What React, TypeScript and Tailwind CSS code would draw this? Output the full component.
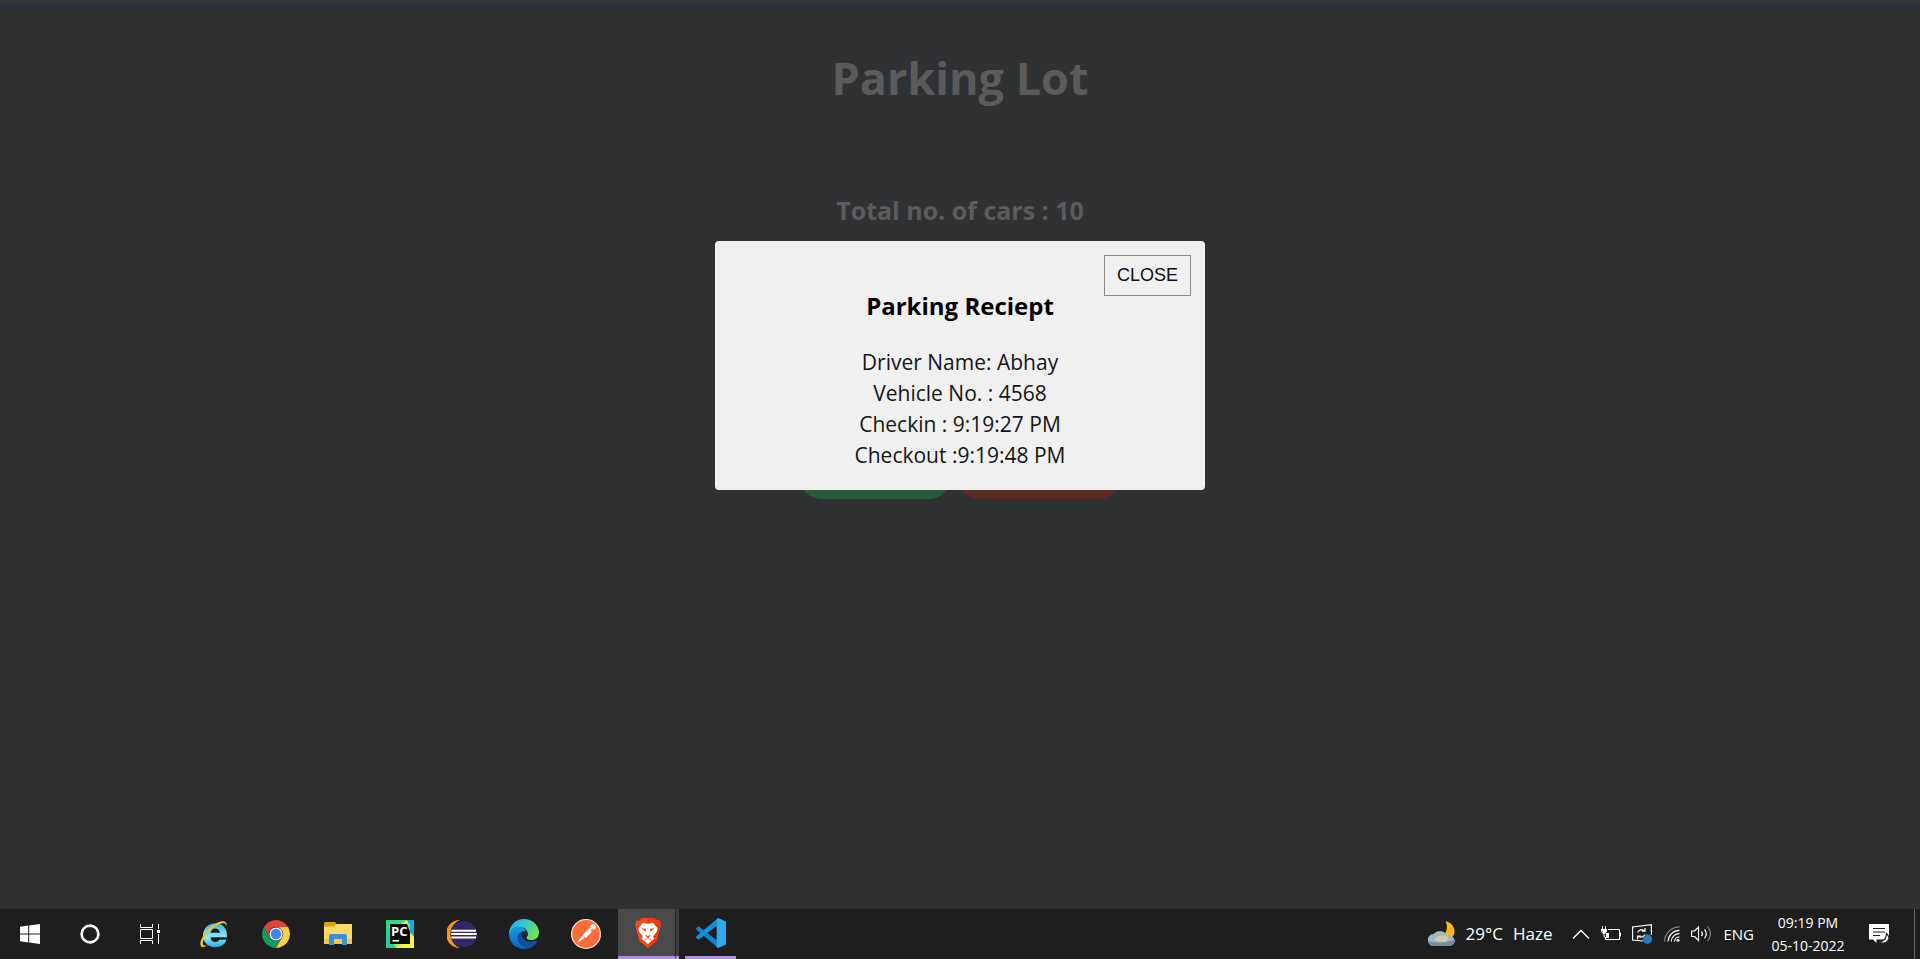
import type { ReactNode } from "react";

const receipt = ["Driver Name: Abhay", "Vehicle No. : 4568", "Checkin : 9:19:27 PM", "Checkout :9:19:48 PM"];

function StartIcon() {
  return (
    <svg width="20" height="20" viewBox="0 0 20 20" fill="#fff">
      <path d="M0 2.8 8.2 1.6V9.5H0zM9.2 1.5 20 0v9.5H9.2zM0 10.5h8.2v8L0 17.3zM9.2 10.5H20V20L9.2 18.6z" />
    </svg>
  );
}

function CortanaIcon() {
  return (
    <svg width="20" height="20" viewBox="0 0 20 20" fill="none">
      <circle cx="10" cy="10" r="8.4" stroke="#fff" strokeWidth="2.6" />
    </svg>
  );
}

function TaskViewIcon() {
  return (
    <svg width="20" height="20" viewBox="0 0 20 20" fill="none" stroke="#fff" strokeWidth="1">
      <path d="M.5 5.500h12v9H.5zM.5 0v3.500h12V0M.5 20v-3.500h12V20M18.500 0v5M18.500 10v10" />
      <path d="M17 6h3v3h-3z" fill="#fff" stroke="none" />
    </svg>
  );
}

function ExplorerEIcon() {
  return (
    <svg width="30" height="30" viewBox="0 0 30 30" fill="none">
      <defs>
        <linearGradient id="ie" x1="0" y1="0" x2="0" y2="1">
          <stop stopColor="#3fb4e4" />
          <stop offset=".6" stopColor="#8be9fc" />
          <stop offset="1" stopColor="#2ea2df" />
        </linearGradient>
      </defs>
      <path d="M28 18.200H11.500c.2 3 2 4.800 4.700 4.800 2 0 3.300-.8 4.100-2.200h7.200C26 25.500 21.800 28.200 16.300 28.200 9 28.200 4 23.500 4 16.500S9.200 4.200 16.500 4.200c7.300 0 12 5.200 11.500 14zM20.900 13.800c-.2-2.500-1.900-4.200-4.500-4.200s-4.400 1.700-4.800 4.200z" fill="url(#ie)" />
      <path d="M27.300 7.800c.8-2.700.3-4.500-1.400-5.100C20.500.6 8.500 8.300 3.600 17.700.8 23.100.5 27.400 3.400 28c1.500.3 3.600-.5 5.900-2-6.300 2.300-6.800-1.900-3.300-8C10.600 9.900 20.300 3.700 24.900 4.300c1.600.2 2.400 1.300 2.400 3.500z" fill="#f2c624" />
    </svg>
  );
}

function ChromeIcon() {
  return (
    <svg width="28" height="28" viewBox="0 0 28 28">
      <path d="M1.900 7A14 14 0 0 1 26.100 7H14a7 7 0 0 0-6.100 10.500z" fill="#dc4437" />
      <path d="M1.900 7A14 14 0 0 0 14 28l6.100-10.500a7 7 0 0 1-12.200 0z" fill="#109d59" />
      <path d="M26.100 7A14 14 0 0 1 14 28l6.100-10.500A7 7 0 0 0 14 7z" fill="#fccd41" />
      <circle cx="14" cy="14" r="6.600" fill="#eef1f6" />
      <circle cx="14" cy="14" r="5.200" fill="#4286f5" />
    </svg>
  );
}

function FolderIcon() {
  return (
    <svg width="28" height="24" viewBox="0 0 28 24">
      <path d="M0 1.500Q0 0 1.500 0H11l2 2.500-2 3H0z" fill="#dfa00c" />
      <path d="M0 4.500h10L12.500 2H28v19a1 1 0 0 1-1 1H1a1 1 0 0 1-1-1z" fill="#ffda6b" />
      <path d="M0 17h28v4a1 1 0 0 1-1 1H1a1 1 0 0 1-1-1z" fill="#f6c64b" />
      <path d="M5 23V14q0-2 2-2h14q2 0 2 2v9h-5v-6h-8v6z" fill="#3b8fd3" />
    </svg>
  );
}

function PyCharmIcon() {
  return (
    <svg width="28" height="28" viewBox="0 0 28 28">
      <defs>
        <linearGradient id="pc" x1="0" y1="0" x2="1" y2="1">
          <stop stopColor="#21d789" />
          <stop offset=".5" stopColor="#3fe07e" />
          <stop offset=".75" stopColor="#fcf84a" />
          <stop offset="1" stopColor="#fcf84a" />
        </linearGradient>
      </defs>
      <path d="M0 0h28v28H0z" fill="url(#pc)" />
      <path d="M0 10 10 28H0z" fill="#1fd49a" />
      <path d="M20 0h8v17l-4-5V4z" fill="#15a7e8" />
      <path d="M15 4l6-4 2 5z" fill="#f3ee55" />
      <path d="M4 4h20v20H4z" fill="#0a0a0a" />
      <path d="m21 4 3 8V4z" fill="#8fdc5a" />
      <text x="5" y="16" fill="#fff" fontFamily="Open Sans, sans-serif" fontWeight="700" fontSize="13">PC</text>
      <path d="M6.500 20H13v1.600H6.500z" fill="#fff" />
    </svg>
  );
}

function EclipseIcon() {
  return (
    <svg width="30" height="28" viewBox="0 0 30 28">
      <path d="M13 0A14 14 0 0 0 13 28 15 15 0 0 1 13 0z" fill="#f7941e" />
      <circle cx="17" cy="14" r="13" fill="#33276a" />
      <path d="M4.500 9.700h24.500v2H4.200zM3.900 13h25.800v2H3.900zM4.200 16.400h25l-.3 2H4.500z" fill="#fff" />
    </svg>
  );
}

function EdgeIcon() {
  return (
    <svg width="30" height="30" viewBox="0 0 30 30">
      <defs>
        <linearGradient id="edge-top" x1="0" y1="0" x2="1" y2=".5">
          <stop stopColor="#2aa8e4" />
          <stop offset=".5" stopColor="#39c5d2" />
          <stop offset="1" stopColor="#6be254" />
        </linearGradient>
        <linearGradient id="edge-side" x1="0" y1="0" x2="0" y2="1">
          <stop stopColor="#1ca0e4" />
          <stop offset="1" stopColor="#0d63bd" />
        </linearGradient>
      </defs>
      <path d="M0 14.500C0 7 7 5 12 7c3 1 5 4 5.500 6-3-1-5 2-4.500 5 1 4.500 7 6.500 12 4.500 1.800-.7 3.300-1.200 3 .3C25.500 27 20.500 30 15 30 6.500 30 0 23.500 0 14.500z" fill="url(#edge-side)" />
      <path d="M13 12.500C8 14 7 20 10.500 24.500c3 3.800 7 5 10.500 4.200 3-1.200 5.700-3.400 7.200-6.200.3-.9-.8-.7-1.500-.4-6 2-12-.6-13.200-4.600-.5-1.800-.5-3.500-.5-5z" fill="#124f9d" />
      <path d="M0 14.500C.5 6 7 0 15 0c9 0 15 6.500 15 13.500 0 5-3.500 7.500-7.500 7.500-3 0-5-1-5-2.300 0-.8 1.300-1.200 1.300-3.700 0-4.500-4-7.500-9.300-7.500C5 7.500 1.500 10 0 14.500z" fill="url(#edge-top)" />
      <circle cx="15.300" cy="15.300" r="3.200" fill="#152636" />
    </svg>
  );
}

function PostmanIcon() {
  return (
    <svg width="30" height="30" viewBox="0 0 30 30">
      <circle cx="15" cy="15" r="15" fill="#fde9df" />
      <circle cx="15" cy="15" r="13.900" fill="#fb6d38" />
      <path d="m6 24 5.300-7.600 2.500 2.400zM13 16.300l5.800-6 2 2-6.200 5.600z" fill="#fff" />
      <path d="m12.500 16.800 7-7" stroke="#fff" strokeWidth="2.500" />
      <circle cx="22" cy="8" r="2.800" fill="#fff" />
      <path d="m20.500 8.500 2 1.500" stroke="#fb6d38" />
      <path d="m14 18.500 6-5.500" stroke="#fff" strokeWidth="1.200" />
    </svg>
  );
}

function BraveIcon() {
  return (
    <svg width="26" height="30" viewBox="0 0 26 30">
      <path d="M7 0h12l3.500 2.800 2-.2L26 6l-1 4-3.500 13L13 30 4.500 23 1 10 0 6l1.500-3.400 2 .2z" fill="#f4471f" />
      <path d="M13 0h6l3.500 2.800 2-.2L26 6l-1 4-3.500 13L13 30z" fill="#ee3a10" />
      <path d="m8 4.800 5 .9 5-.9 4.700 5.500-.9 3.700-3.700 4.300 1.200 2.400-2.300 1.800-4-2.500-4 2.500-2.300-1.800 1.200-2.400L4.200 14l-.9-3.700z" fill="#fff" />
      <path d="m6.500 10 4.500 1-.5 3zM19.500 10 15 11l.5 3zM10 16.500l3 1.500 3-1.500-1.800 3h-2.400z" fill="#f4471f" />
      <path d="m9 22.800 4-2 4 2-4 3.200z" fill="#fff" />
    </svg>
  );
}

function CodeIcon() {
  return (
    <svg width="30" height="30" viewBox="0 0 30 30">
      <path d="M0 10.600 2.500 8.300l19.700 15V30L.4 11.800q-.6-.6-.4-1.200z" fill="#1580c4" />
      <path d="M0 19.500 2.500 21.800l19.700-15V0L.4 18.300q-.6.600-.4 1.200z" fill="#1a8fd8" />
      <path d="m22.200 0 7.800 3.500v23L22.200 30q-1.500-.4-1.500-2V2q0-1.600 1.500-2z" fill="#2fa9ee" />
    </svg>
  );
}

function WeatherIcon() {
  return (
    <svg width="28" height="26" viewBox="0 0 28 26">
      <path d="M17.500 0c6 1.500 9 6 9 10.500 0 3-1.500 5.500-4 6.500l-6.500-3C19 10.500 20 5 17.500 0z" fill="#fcb813" />
      <path d="M6 25a6 6 0 0 1-.5-12A8 7.500 0 0 1 19 14a6 5.600 0 1 1 2.500 11z" fill="#a3b5c3" />
      <path d="M6 19C9 14.500 14 13.500 19 15c2 1.500 1 5-3 6z" fill="#d0caa8" />
      <path d="M.3 20q13 4 26.900-1.500A5.900 5.900 0 0 1 21.500 25H6Q1.500 25 .3 20z" fill="#7a8d9e" />
    </svg>
  );
}

function ChevronIcon() {
  return (
    <svg width="18" height="12" viewBox="0 0 18 12" fill="none" stroke="#fff" strokeWidth="1.300">
      <path d="m1 10.500 8-8 8 8" />
    </svg>
  );
}

function BatteryIcon() {
  return (
    <svg width="20" height="16" viewBox="0 0 20 16" fill="none" stroke="#fff" strokeWidth="1">
      <path d="M7 3.500h11.500v10h-14V11M19.500 6.500v4M1.500 0v3M4.500 0v3M0 3.500h6M.5 3.500v2l1.500 2h2l1.500-2v-2M3 7.500V10q0 1.500 1.500 1.500" />
      <path d="M1 4h4v1.500L4 7H2zM5 7h3v5H5z" fill="#fff" stroke="none" />
    </svg>
  );
}

function SyncIcon() {
  return (
    <svg width="21" height="20" viewBox="0 0 21 20" fill="none" stroke="#fff" strokeWidth="1.200">
      <path d="M11 17 .6 16V3L19.400.7V11" />
      <path d="M5.500 8.500q3.500-5 7-1.500M13 4v3.200H9.800M13 10.500q-3 4.500-7 1.500M5.600 15.200V12h3.200" />
      <circle cx="15.500" cy="15.200" r="4.700" fill="#2d78bd" stroke="none" />
    </svg>
  );
}

function WifiIcon() {
  return (
    <svg width="16" height="16" viewBox="0 0 16 16" fill="none" stroke="#fff" strokeWidth="1.200">
      <path d="M.6 15.500A15 15 0 0 1 15.500.8" stroke="#8a8a8a" />
      <path d="M4 15.500A11.500 11.500 0 0 1 15.500 4.300M7.300 15.500a8 8 0 0 1 8.200-7.800M10.500 15.500a5 5 0 0 1 5-4.500" />
      <circle cx="14" cy="14.300" r="1.500" fill="#fff" stroke="none" />
    </svg>
  );
}

function VolumeIcon() {
  return (
    <svg width="21" height="18" viewBox="0 0 21 18" fill="none" stroke="#fff" strokeWidth="1.200">
      <path d="M.6 6h3L7.500 2v13.500l-3.900-4h-3z" />
      <path d="M10.500 6.500q1.800 2.300 0 4.600M13.500 4.300q3.600 4.500 0 9" />
      <path d="M16.500 1.500q6 7.300 0 14.600" stroke="#777" />
    </svg>
  );
}

function NotificationIcon() {
  return (
    <svg width="21" height="20" viewBox="0 0 21 20" fill="none">
      <path d="M0 0h20v15.500H7.500V19L4 15.500H0z" fill="#fff" />
      <path d="M4 4.500h12M4 8h12M4 11.500h7" stroke="#1e1e1e" strokeWidth="1.200" />
      <path d="M17.500 9.500q4 3.500 1.500 7.200-3.500 4.300-9 1.300 7.500-1 7.500-8.500z" fill="#fff" stroke="#1e1e1e" strokeWidth="1.200" />
    </svg>
  );
}

const systemButtons: { name: string; icon: ReactNode }[] = [
  { name: "Start", icon: <StartIcon /> },
  { name: "Cortana", icon: <CortanaIcon /> },
  { name: "Task View", icon: <TaskViewIcon /> },
];

const apps: { name: string; icon: ReactNode }[] = [
  { name: "Internet Explorer", icon: <ExplorerEIcon /> },
  { name: "Chrome", icon: <ChromeIcon /> },
  { name: "File Explorer", icon: <FolderIcon /> },
  { name: "PyCharm", icon: <PyCharmIcon /> },
  { name: "Eclipse", icon: <EclipseIcon /> },
  { name: "Edge", icon: <EdgeIcon /> },
  { name: "Postman", icon: <PostmanIcon /> },
];

function Taskbar() {
  return (
    <footer className="flex h-[50px] shrink-0 items-stretch justify-between bg-[#1e1e1e] font-['Open_Sans',sans-serif] text-white">
      <nav aria-label="Taskbar" className="flex items-stretch">
        {systemButtons.map((b) => (
          <button key={b.name} aria-label={b.name} className="flex w-[60px] items-center justify-center">
            {b.icon}
          </button>
        ))}
        <div className="ml-[3px] flex items-stretch">
          {apps.map((a) => (
            <button key={a.name} aria-label={a.name} className="flex w-[62px] items-center justify-center">
              {a.icon}
            </button>
          ))}
          <button aria-label="Brave" className="ml-px flex w-[57px] items-center justify-center border-b-3 border-[#b18fdf] bg-[#4a4a4a] pl-[2px]">
            <BraveIcon />
          </button>
          <span className="w-1 border-b-3 border-l border-b-[#b18fdf] border-l-[#242424] bg-[#3c3c3c]" />
          <button aria-label="Visual Studio Code" className="ml-[6px] flex w-[51px] items-center justify-center border-b-3 border-[#b18fdf]">
            <CodeIcon />
          </button>
        </div>
      </nav>
      <div className="flex items-center">
        <button className="flex items-center gap-[10px] text-[17px]">
          <WeatherIcon />
          <span>29°C</span>
          <span>Haze</span>
        </button>
        <div className="ml-5 flex items-center gap-[11px]">
          <button aria-label="Show hidden icons"><ChevronIcon /></button>
          <button aria-label="Battery"><BatteryIcon /></button>
          <button aria-label="Updates"><SyncIcon /></button>
          <button aria-label="Network"><WifiIcon /></button>
          <button aria-label="Volume"><VolumeIcon /></button>
          <button className="text-[15px]">ENG</button>
        </div>
        <button className="ml-4 w-[76px] text-center text-sm leading-[23px] whitespace-nowrap">
          <span className="block">09:19 PM</span>
          <span className="block">05-10-2022</span>
        </button>
        <button aria-label="Notifications" className="ml-[23px]"><NotificationIcon /></button>
        <span className="ml-6 h-[50px] w-[6px] border-l border-[#666]" />
      </div>
    </footer>
  );
}

export default function App() {
  return (
    <div className="flex min-h-screen flex-col bg-[#2f3132] font-['Open_Sans',sans-serif]">
      <main className="relative flex flex-1 flex-col items-center text-[#5b5b5c]">
        <div className="h-[6px] w-full bg-linear-to-b from-[#363849] to-[#2f3132]" />
        <h1 className="mt-10 text-[45px] leading-[64px] font-bold">Parking Lot</h1>
        <h2 className="mt-[83px] text-[25px] leading-[34px] font-bold">Total no. of cars : 10</h2>
        <div className="mt-56 flex gap-1">
          <button aria-label="Checkin" className="h-12 w-[154px] rounded-3xl bg-[#295b3b]" />
          <button aria-label="Checkout" className="h-12 w-[166px] rounded-3xl bg-[#5b2c27]" />
        </div>
        <div className="absolute inset-0 flex items-start justify-center pt-[241px]">
          <section role="dialog" aria-label="Parking Reciept" className="relative w-[490px] rounded bg-[#f0f0f0] pt-12 pb-[19px] text-center text-black">
            <button className="absolute top-[14px] right-[14px] border border-[#8a8a8a] px-3 py-2 font-['Liberation_Sans',sans-serif] text-lg leading-[23px] text-[#111]">
              CLOSE
            </button>
            <h3 className="text-2xl leading-[34px] font-bold">Parking Reciept</h3>
            <div className="mt-6 text-[21px] leading-[31px] text-[#151515]">
              {receipt.map((line) => (
                <p key={line}>{line}</p>
              ))}
            </div>
          </section>
        </div>
      </main>
      <Taskbar />
    </div>
  );
}
